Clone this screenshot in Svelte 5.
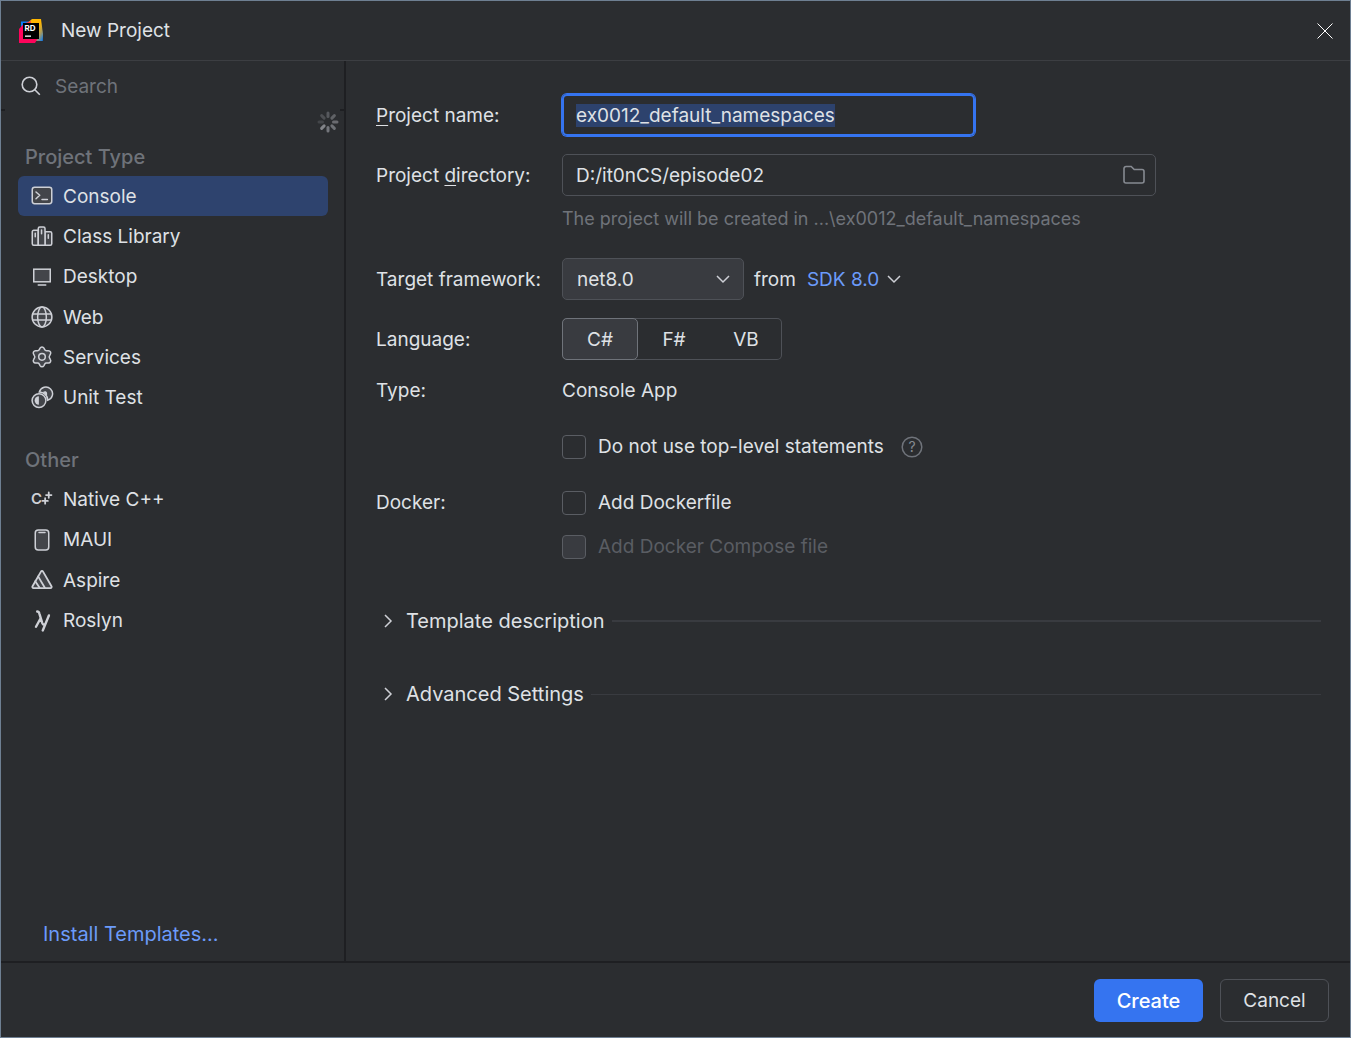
<script>
  import { onMount } from 'svelte';

  const projectTypes = [
    { label: 'Console', icon: 'console' },
    { label: 'Class Library', icon: 'library' },
    { label: 'Desktop', icon: 'desktop' },
    { label: 'Web', icon: 'web' },
    { label: 'Services', icon: 'services' },
    { label: 'Unit Test', icon: 'test' }
  ];
  const otherTypes = [
    { label: 'Native C++', icon: 'cpp' },
    { label: 'MAUI', icon: 'maui' },
    { label: 'Aspire', icon: 'aspire' },
    { label: 'Roslyn', icon: 'roslyn' }
  ];
  const languages = ['C#', 'F#', 'VB'];
  const spokes = [0.75, 0.9, 0.25, 0.35, 0.45, 0.55, 0.65, 0.7];

  let selected = $state('Console');
  let language = $state('C#');
  let projectName = $state('ex0012_default_namespaces');
  let directory = $state('D:/it0nCS/episode02');
  let nameInput;

  onMount(() => {
    nameInput.focus();
    nameInput.select();
  });
</script>

{#snippet typeIcon(name)}
  <svg class="type-icon" viewBox="0 0 16 16" aria-hidden="true">
    {#if name === 'console'}
      <rect x="1.5" y="2.1" width="13" height="11" rx="1.6" />
      <path class="line" d="M4 5.3l2.5 2.2L4 9.8M8 10.3h3.6" />
    {:else if name === 'library'}
      <path d="M1.5 5.2a1 1 0 0 1 1-1h3v9.9h-3a1 1 0 0 1-1-1z" />
      <path d="M10 5.2h3.5a1 1 0 0 1 1 1v6.9a1 1 0 0 1-1 1H10z" />
      <path d="M5.5 3a1 1 0 0 1 1-1H9a1 1 0 0 1 1 1v11.1H5.5z" />
      <path class="line" d="M3.5 6.2v2.3M7.7 4v2.5M12.2 7.2v2.3" />
    {:else if name === 'desktop'}
      <rect x="2.5" y="2.8" width="11" height="8.4" />
      <path class="line" d="M5.5 13.3h5" />
    {:else if name === 'web'}
      <circle cx="8" cy="8" r="6.6" />
      <ellipse cx="8" cy="8" rx="2.9" ry="6.6" />
      <path class="line" d="M1.7 6h12.6M1.7 10h12.6" />
    {:else if name === 'services'}
      <path d="M6.7 2.1a1.5 1.5 0 0 1 2.6 0l.5 1a1.3 1.3 0 0 0 1.2.7h1.3a1.5 1.5 0 0 1 1.3 2.3l-.6 1.1a1.3 1.3 0 0 0 0 1.4l.6 1.1a1.5 1.5 0 0 1-1.3 2.3H11a1.3 1.3 0 0 0-1.2.7l-.5 1a1.5 1.5 0 0 1-2.6 0l-.5-1a1.3 1.3 0 0 0-1.2-.7H3.7a1.5 1.5 0 0 1-1.3-2.3L3 8.6a1.3 1.3 0 0 0 0-1.4L2.4 6.1a1.5 1.5 0 0 1 1.3-2.3H5a1.3 1.3 0 0 0 1.2-.7z" />
      <circle cx="8" cy="7.9" r="2.2" />
    {:else if name === 'test'}
      <path d="M6.2 4A4.5 4.5 0 1 1 11.8 9.5A5.6 5.6 0 0 0 6.2 4z" />
      <path class="solid" d="M8.5 4.2C9.6 3 11.2 3.4 11.4 4.6V7.5C11 6 10 4.9 8.5 4.2z" />
      <circle cx="6" cy="9.7" r="4.6" />
      <path class="solid" d="M5.9 6.9a2.8 2.8 0 0 0 0 5.6z" />
    {:else if name === 'cpp'}
      <text x="0.6" y="11" font-size="10" font-weight="600">C</text>
      <path class="line bold" d="M10.1 7.5v3.6M8.3 9.3h3.6M12.5 3.6v3.6M10.7 5.4h3.6" />
    {:else if name === 'maui'}
      <rect x="3.5" y="1.4" width="9" height="13.2" rx="2" />
      <path class="line" d="M6 3h4" />
    {:else if name === 'aspire'}
      <path class="bold" d="M7.3 2.4a.8.8 0 0 1 1.4 0l5.7 9.9a.8.8 0 0 1-.7 1.1H2.3a.8.8 0 0 1-.7-1.1z" />
      <path class="line bold" d="M5.4 5.6L9.9 13.2M3.5 8.8L6.4 13.2" />
    {:else if name === 'roslyn'}
      <path class="line heavy" d="M4.8 1.7c1 0 1.2.4 1.5 1.5L8.2 9.4c.3.9.6 1.2 1.2 1.1M7 6.3L4 11.8M12.6 4.3L8.5 14.3" />
    {/if}
  </svg>
{/snippet}

{#snippet typeList(title, items)}
  <h2>{title}</h2>
  <div class="types">
    {#each items as item}
      <button class="type" class:selected={selected === item.label} aria-pressed={selected === item.label} onclick={() => (selected = item.label)}>
        {@render typeIcon(item.icon)}
        <span>{item.label}</span>
      </button>
    {/each}
  </div>
{/snippet}

{#snippet chevron()}
  <svg class="chevron" viewBox="0 0 16 16" aria-hidden="true"><path d="M4 6l4 4 4-4" /></svg>
{/snippet}

<div class="dialog">
  <header>
    <svg class="logo" viewBox="0 0 24 24" aria-hidden="true">
      <defs>
        <linearGradient id="warm" x1="0" y1="0" x2="1" y2="1">
          <stop offset="0.5" stop-color="#ffb600" />
          <stop offset="0.75" stop-color="#a59a60" />
          <stop offset="1" stop-color="#087cfa" />
        </linearGradient>
        <linearGradient id="pink" x1="0" y1="1" x2="1" y2="0">
          <stop offset="0.5" stop-color="#ff045b" />
          <stop offset="1" stop-color="#ff8a1c" />
        </linearGradient>
      </defs>
      <path fill="#087cfa" d="M2 2.5H10L6 8H2zM15 22h8.5l.5-7-6-3z" />
      <path fill="url(#warm)" d="M9 3.5L13 0h9l2 15-.5 7H17z" />
      <path fill="url(#pink)" d="M0 10l5-5.5L12 2v17h7l-3 5H0z" />
      <rect x="4" y="4" width="16" height="16" />
      <text x="5.5" y="12" font-size="8" font-weight="700">RD</text>
      <path fill="#fff" d="M6 16.5h6v1.3H6z" />
    </svg>
    <h1>New Project</h1>
    <button class="close" aria-label="Close">
      <svg viewBox="0 0 16 16" aria-hidden="true"><path d="M.5.5l15 15M15.5.5l-15 15" /></svg>
    </button>
  </header>

  <div class="body">
    <aside>
      <label class="search">
        <svg viewBox="0 0 20 20" aria-hidden="true"><circle cx="8.5" cy="8.5" r="7.3" /><path d="M13.8 13.8l5 5" /></svg>
        <input type="search" placeholder="Search" aria-label="Search" />
      </label>
      <div class="edges"><span></span><span></span></div>
      <svg class="spinner" viewBox="-11 -11 22 22" role="img" aria-label="Loading">
        {#each spokes as strength, i}
          <path d="M0-5.5V-9" transform="rotate({180 + i * 45})" opacity={strength} />
        {/each}
      </svg>
      <nav aria-label="Project templates">
        {@render typeList('Project Type', projectTypes)}
        {@render typeList('Other', otherTypes)}
      </nav>
      <a class="install" href="#templates">Install Templates...</a>
    </aside>

    <main>
      <form id="project" onsubmit={(e) => e.preventDefault()}>
        <div class="row">
          <label class="name" for="project-name"><u>P</u>roject name:</label>
          <input id="project-name" class="field focused" type="text" spellcheck="false" bind:this={nameInput} bind:value={projectName} />
        </div>
        <div class="row">
          <label class="name" for="project-directory">Project <u>d</u>irectory:</label>
          <div class="field directory">
            <input id="project-directory" type="text" spellcheck="false" bind:value={directory} />
            <button type="button" aria-label="Browse">
              <svg viewBox="0 0 22 20" aria-hidden="true"><path d="M1 3.5A2 2 0 0 1 3 1.5h5.2l3 3H19a2 2 0 0 1 2 2v9.5a2 2 0 0 1-2 2H3a2 2 0 0 1-2-2z" /></svg>
            </button>
          </div>
        </div>
        <p class="hint">The project will be created in ...\{projectName}</p>
        <div class="row">
          <label class="name" for="framework">Target framework:</label>
          <div class="combo">
            <select id="framework"><option>net8.0</option></select>
            {@render chevron()}
          </div>
          <label class="from" for="sdk">from</label>
          <div class="sdk">
            <select id="sdk"><option>SDK 8.0</option></select>
            {@render chevron()}
          </div>
        </div>
        <div class="row">
          <span class="name" id="language-label">Language:</span>
          <div class="segments" role="radiogroup" aria-labelledby="language-label">
            {#each languages as lang}
              <label class:active={language === lang}>
                <input type="radio" name="language" value={lang} bind:group={language} />{lang}
              </label>
            {/each}
          </div>
        </div>
        <div class="row short">
          <span class="name">Type:</span>
          <span>Console App</span>
        </div>
        <div class="row check indented">
          <label><input type="checkbox" />Do not use top-level statements</label>
          <button class="help" type="button" aria-label="Help">
            <svg viewBox="0 0 22 22" aria-hidden="true"><circle cx="11" cy="11" r="9.8" /><text x="11" y="16" font-size="14" text-anchor="middle">?</text></svg>
          </button>
        </div>
        <div class="row check">
          <span class="name">Docker:</span>
          <label><input type="checkbox" />Add Dockerfile</label>
        </div>
        <div class="row check indented nested">
          <label class="disabled"><input type="checkbox" disabled />Add Docker Compose file</label>
        </div>
      </form>
      <button class="expander strong">{@render chevron()}<span>Template description</span></button>
      <button class="expander">{@render chevron()}<span>Advanced Settings</span></button>
    </main>
  </div>

  <footer>
    <button class="primary" type="submit" form="project">Create</button>
    <button class="secondary" type="button">Cancel</button>
  </footer>
</div>

<style>
  :global(body) {
    margin: 0;
    background: #2b2d30;
  }
  .dialog,
  .dialog * {
    box-sizing: border-box;
  }
  .dialog {
    display: flex;
    flex-direction: column;
    min-height: 100vh;
    border: 1px solid #6e7f92;
    background: #2b2d30;
    color: #dfe1e5;
    font: 19px/25px Inter, 'Liberation Sans', sans-serif;
  }
  button,
  input,
  select {
    margin: 0;
    padding: 0;
    border: 0;
    outline: 0;
    background: none;
    color: inherit;
    font: inherit;
  }
  input {
    min-width: 0;
  }
  svg {
    display: block;
    flex: none;
    fill: none;
  }
  h1,
  p {
    margin: 0;
    font-size: 19px;
    font-weight: 400;
  }

  header {
    display: flex;
    align-items: center;
    height: 60px;
    padding: 0 17px 0 18px;
    border-bottom: 1px solid #3c3e42;
  }
  .logo {
    width: 24px;
    height: 24px;
    margin-right: 18px;
  }
  .logo rect {
    fill: #000;
  }
  .logo text {
    fill: #fff;
  }
  .close {
    margin-left: auto;
  }
  .close svg {
    width: 16px;
    height: 16px;
    stroke: #fff;
  }

  .body {
    display: flex;
    flex: 1;
  }
  aside {
    display: flex;
    flex-direction: column;
    flex: none;
    width: 345px;
    border-right: 2px solid #1e1f22;
  }
  .search {
    display: flex;
    align-items: center;
    gap: 14px;
    height: 48px;
    padding: 2px 20px 0;
  }
  .search svg {
    width: 20px;
    height: 20px;
    stroke: #ced0d6;
    stroke-width: 1.6;
  }
  .search input {
    flex: 1;
    appearance: none;
  }
  .search input::placeholder {
    color: #6f737a;
    opacity: 1;
  }
  .edges {
    display: flex;
    justify-content: space-between;
  }
  .edges span {
    width: 4px;
    height: 2px;
    background: #1e1f22;
  }
  .spinner {
    align-self: flex-end;
    width: 22px;
    height: 22px;
    margin-right: 5px;
    stroke: #8c8e94;
    stroke-width: 3;
    stroke-linecap: round;
  }
  nav {
    padding: 12px 16px 0 17px;
  }
  h2 {
    margin: 0;
    padding: 0 7px;
    color: #6f737a;
    font-size: 20px;
    font-weight: 500;
    line-height: 24px;
  }
  .types {
    display: grid;
    grid-auto-rows: 1fr;
    min-height: 242px;
    margin: 7px 0 30px;
  }
  .types:last-child {
    min-height: 162px;
    margin-bottom: 0;
  }
  .type {
    display: flex;
    align-items: center;
    gap: 9px;
    min-height: 40px;
    padding: 0 12px;
    border-radius: 6px;
    text-align: left;
  }
  .type.selected {
    background: #2e436e;
  }
  .type-icon {
    width: 24px;
    height: 24px;
    fill: #43454a;
    stroke: #ced0d6;
  }
  .type-icon .line {
    fill: none;
    stroke-linecap: round;
    stroke-linejoin: round;
  }
  .type-icon .bold {
    stroke-width: 1.2;
  }
  .type-icon .heavy {
    stroke-width: 1.6;
  }
  .type-icon .solid,
  .type-icon text {
    fill: #ced0d6;
    stroke: none;
  }
  .install {
    align-self: flex-start;
    margin: auto 0 0 42px;
    padding-bottom: 15px;
    color: #6b9bfa;
    font-size: 20px;
    line-height: 24px;
    text-decoration: none;
  }

  main {
    flex: 1;
    min-width: 0;
    padding: 33px 29px 24px 30px;
  }
  .row {
    display: flex;
    align-items: center;
    min-height: 42px;
    margin-bottom: 18px;
  }
  .name {
    flex: none;
    width: 186px;
  }
  u {
    text-decoration-thickness: 1px;
    text-underline-offset: 3px;
  }
  .field {
    flex: 0 1 594px;
    height: 42px;
    border: 1px solid #4e5157;
    border-radius: 5px;
  }
  .focused {
    flex-basis: 413px;
    padding: 0 12px;
    border: 2px solid #3574f0;
    box-shadow: 0 0 0 1px #3574f0;
  }
  input::selection {
    background: rgba(46, 67, 110, 0.99);
    color: #dfe1e5;
  }
  .directory {
    display: flex;
    align-items: center;
    padding: 0 10px 0 13px;
  }
  .directory input {
    flex: 1;
  }
  .directory svg {
    width: 22px;
    height: 20px;
    stroke: #868a91;
    stroke-width: 1.6;
  }
  .hint {
    margin: -8px 0 27px 186px;
    color: #6f737a;
    font-size: 18px;
  }
  .chevron {
    width: 24px;
    height: 24px;
    stroke: #ced0d6;
  }
  select {
    appearance: none;
  }
  .combo {
    display: grid;
    align-items: center;
    width: 182px;
    height: 42px;
    border: 1px solid #4e5157;
    border-radius: 5px;
    background: #393b40;
  }
  .combo > :global(*) {
    grid-area: 1 / 1;
  }
  .combo select {
    height: 100%;
    padding: 0 32px 0 14px;
  }
  .combo .chevron {
    justify-self: end;
    margin-right: 8px;
    pointer-events: none;
  }
  .from {
    margin: 0 11px 0 10px;
  }
  .sdk {
    display: flex;
    align-items: center;
    gap: 2px;
  }
  .sdk select {
    color: #6b9bfa;
  }
  .segments {
    display: flex;
    height: 42px;
    border-radius: 5px;
    box-shadow: inset 0 0 0 1px #4e5157;
  }
  .segments label {
    display: grid;
    place-items: center;
    width: 72px;
    border: 1px solid transparent;
    border-radius: 5px;
  }
  .segments label:first-child {
    width: 76px;
  }
  .segments .active {
    border-color: #6f737a;
    background: #393b40;
  }
  .segments input {
    position: absolute;
    opacity: 0;
  }
  .short,
  .check {
    min-height: 25px;
    margin-bottom: 31px;
  }
  .check label {
    display: flex;
    align-items: center;
    gap: 12px;
  }
  .indented {
    padding-left: 186px;
  }
  .nested {
    margin-top: -12px;
    margin-bottom: 50px;
  }
  input[type='checkbox'] {
    appearance: none;
    width: 24px;
    height: 24px;
    border: 1px solid #5a5d63;
    border-radius: 4px;
  }
  input[type='checkbox']:checked {
    background: #3574f0;
  }
  input[type='checkbox']:disabled {
    background: #393b40;
  }
  .disabled {
    color: #5a5d63;
  }
  .help {
    margin-left: 17px;
  }
  .help svg {
    width: 22px;
    height: 22px;
    stroke: #6f737a;
    stroke-width: 1.5;
  }
  .help text {
    fill: #868a91;
    stroke: none;
  }
  .expander {
    display: flex;
    align-items: center;
    width: 100%;
    margin-bottom: 49px;
    font-size: 20px;
    line-height: 24px;
    text-align: left;
  }
  .expander .chevron {
    margin-right: 6px;
    transform: rotate(-90deg);
  }
  .expander::after {
    content: '';
    flex: 1;
    height: 1px;
    margin-left: 7px;
    background: #393b40;
  }
  .strong::after {
    height: 2px;
  }

  footer {
    display: flex;
    justify-content: flex-end;
    gap: 17px;
    padding: 16px 21px 15px;
    border-top: 2px solid #1e1f22;
  }
  footer button {
    width: 109px;
    height: 43px;
    border-radius: 6px;
  }
  .primary {
    background: #3574f0;
    color: #fff;
    font-size: 20px;
    font-weight: 500;
    line-height: 24px;
  }
  .secondary {
    border: 1px solid #4e5157;
  }
</style>
